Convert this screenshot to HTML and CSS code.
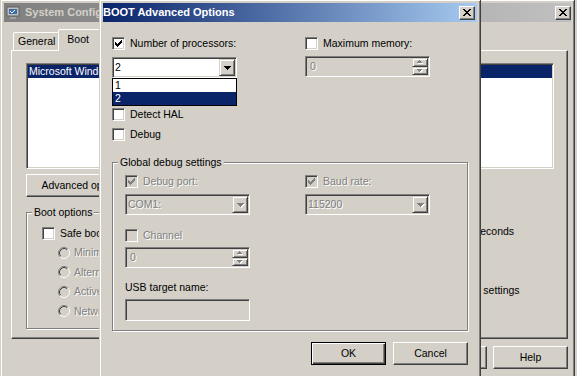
FILE: index.html
```html
<!DOCTYPE html>
<html>
<head>
<meta charset="utf-8">
<title>BOOT Advanced Options</title>
<link rel="stylesheet" href="styles.css">
</head>
<body>

<div class="win sysconf">
  <div class="titlebar inactive">
    <svg class="app-icon" width="16" height="16" viewBox="0 0 16 16">
      <rect x="2" y="2" width="12" height="9" fill="#c0c0c0" stroke="#606060"/>
      <rect x="4" y="4" width="8" height="5" fill="#3a6ea5"/>
      <path d="M5 6l2 2 3-3" stroke="#fff" fill="none"/>
      <rect x="5" y="12" width="6" height="2" fill="#a0a0a0"/>
    </svg>
    <span class="title-text">System Configuration</span>
    <span class="closebtn"><svg width="8" height="7" viewBox="0 0 8 7"><path d="M0 0h2v1H0zM6 0h2v1H6zM1 1h2v1H1zM5 1h2v1H5zM2 2h4v1H2zM3 3h2v1H3zM2 4h4v1H2zM1 5h2v1H1zM5 5h2v1H5zM0 6h2v1H0zM6 6h2v1H6z" fill="#000"/></svg></span>
  </div>
  <div class="client sys-client">
    <div class="tabs">
      <span class="tab">General</span>
      <span class="tab sel">Boot</span>
    </div>
    <div class="panel">
      <div class="listbox field">
        <div class="lb-row sel">Microsoft Windows Server 2008 (C:\Windows) : Current OS; Default OS</div>
      </div>
      <div class="btn-row">
        <button class="btn adv">Advanced options...</button>
      </div>
      <div class="panel-bottom">
        <div class="group boot-group">
          <span class="group-label">Boot options</span>
          <label class="chk"><span class="cb field"></span>Safe boot</label>
          <div class="radios">
            <label class="radio disabled"><svg class="rd" width="12" height="12" viewBox="0 0 12 12"><circle cx="6" cy="6" r="4" fill="#d4d0c8"/><path d="M2.11 9.89A5.5 5.5 0 0 1 9.89 2.11" stroke="#808080" fill="none"/><path d="M9.89 2.11A5.5 5.5 0 0 1 2.11 9.89" stroke="#fff" fill="none"/><path d="M2.82 9.18A4.5 4.5 0 0 1 9.18 2.82" stroke="#404040" fill="none"/><path d="M9.18 2.82A4.5 4.5 0 0 1 2.82 9.18" stroke="#d4d0c8" fill="none"/></svg>Minimal</label>
            <label class="radio disabled"><svg class="rd" width="12" height="12" viewBox="0 0 12 12"><circle cx="6" cy="6" r="4" fill="#d4d0c8"/><path d="M2.11 9.89A5.5 5.5 0 0 1 9.89 2.11" stroke="#808080" fill="none"/><path d="M9.89 2.11A5.5 5.5 0 0 1 2.11 9.89" stroke="#fff" fill="none"/><path d="M2.82 9.18A4.5 4.5 0 0 1 9.18 2.82" stroke="#404040" fill="none"/><path d="M9.18 2.82A4.5 4.5 0 0 1 2.82 9.18" stroke="#d4d0c8" fill="none"/></svg>Alternate shell</label>
            <label class="radio disabled"><svg class="rd" width="12" height="12" viewBox="0 0 12 12"><circle cx="6" cy="6" r="4" fill="#d4d0c8"/><path d="M2.11 9.89A5.5 5.5 0 0 1 9.89 2.11" stroke="#808080" fill="none"/><path d="M9.89 2.11A5.5 5.5 0 0 1 2.11 9.89" stroke="#fff" fill="none"/><path d="M2.82 9.18A4.5 4.5 0 0 1 9.18 2.82" stroke="#404040" fill="none"/><path d="M9.18 2.82A4.5 4.5 0 0 1 2.82 9.18" stroke="#d4d0c8" fill="none"/></svg>Active Directory repair</label>
            <label class="radio disabled"><svg class="rd" width="12" height="12" viewBox="0 0 12 12"><circle cx="6" cy="6" r="4" fill="#d4d0c8"/><path d="M2.11 9.89A5.5 5.5 0 0 1 9.89 2.11" stroke="#808080" fill="none"/><path d="M9.89 2.11A5.5 5.5 0 0 1 2.11 9.89" stroke="#fff" fill="none"/><path d="M2.82 9.18A4.5 4.5 0 0 1 9.18 2.82" stroke="#404040" fill="none"/><path d="M9.18 2.82A4.5 4.5 0 0 1 2.82 9.18" stroke="#d4d0c8" fill="none"/></svg>Network</label>
          </div>
        </div>
        <div class="right-col">
          <div class="timeout-row"><span class="field tb"></span><span>seconds</span></div>
          <label class="chk perm"><span class="cb field"></span><span class="wrap">Make all boot settings</span></label>
        </div>
      </div>
    </div>
    <div class="sys-buttons">
      <button class="btn"></button>
      <button class="btn">Help</button>
    </div>
  </div>
</div>

<div class="win dialog">
  <div class="titlebar active">
    <span class="title-text">BOOT Advanced Options</span>
    <span class="closebtn"><svg width="8" height="7" viewBox="0 0 8 7"><path d="M0 0h2v1H0zM6 0h2v1H6zM1 1h2v1H1zM5 1h2v1H5zM2 2h4v1H2zM3 3h2v1H3zM2 4h4v1H2zM1 5h2v1H1zM5 5h2v1H5zM0 6h2v1H0zM6 6h2v1H6z" fill="#000"/></svg></span>
  </div>
  <div class="client dlg-client">
    <div class="top-grid">
      <div class="col">
        <label class="chk"><span class="cb field"><svg class="ck" width="7" height="7" viewBox="0 0 7 7"><path d="M6 0h1v1H6zM5 1h2v1H5zM0 2h1v1H0zM4 2h3v1H4zM0 3h2v1H0zM3 3h3v1H3zM0 4h5v1H0zM1 5h3v1H1zM2 6h1v1H2z" fill="#000"/></svg></span>Number of processors:</label>
        <div class="combo field procs">
          <span class="combo-value">2</span>
          <span class="drop-btn"><svg width="7" height="4" viewBox="0 0 7 4"><path d="M0 0h7v1H0zM1 1h5v1H1zM2 2h3v1H2zM3 3h1v1H3z" fill="#000"/></svg></span>
          <ul class="droplist">
            <li>1</li>
            <li class="sel">2</li>
          </ul>
        </div>
        <label class="chk hal"><span class="cb field"></span>Detect HAL</label>
        <label class="chk debug"><span class="cb field"></span>Debug</label>
      </div>
      <div class="col">
        <label class="chk"><span class="cb field"></span>Maximum memory:</label>
        <div class="spin field disabled memspin">
          <span class="spin-value">0</span>
          <span class="spin-btns">
            <span class="sb"><svg width="6" height="4" viewBox="0 0 6 4"><path d="M3 1h1v1H3zM2 2h3v1H2zM1 3h5v1H1z" fill="#fff"/><path d="M2 0h1v1H2zM1 1h3v1H1zM0 2h5v1H0z" fill="#808080"/></svg></span>
            <span class="sb"><svg width="6" height="4" viewBox="0 0 6 4"><path d="M1 1h5v1H1zM2 2h3v1H2zM3 3h1v1H3z" fill="#fff"/><path d="M0 0h5v1H0zM1 1h3v1H1zM2 2h1v1H2z" fill="#808080"/></svg></span>
          </span>
        </div>
      </div>
    </div>

    <div class="group debug-group">
      <span class="group-label">Global debug settings</span>
      <div class="group-grid">
        <div class="col">
          <label class="chk disabled"><span class="cb field"><svg class="ck" width="7" height="7" viewBox="0 0 7 7"><path d="M6 0h1v1H6zM5 1h2v1H5zM0 2h1v1H0zM4 2h3v1H4zM0 3h2v1H0zM3 3h3v1H3zM0 4h5v1H0zM1 5h3v1H1zM2 6h1v1H2z" fill="#808080"/></svg></span>Debug port:</label>
          <div class="combo field disabled inner-combo">
            <span class="combo-value">COM1:</span>
            <span class="drop-btn"><svg width="8" height="5" viewBox="0 0 8 5"><path d="M1 1h7v1H1zM2 2h5v1H2zM3 3h3v1H3zM4 4h1v1H4z" fill="#fff"/><path d="M0 0h7v1H0zM1 1h5v1H1zM2 2h3v1H2zM3 3h1v1H3z" fill="#808080"/></svg></span>
          </div>
          <label class="chk disabled channel"><span class="cb field"></span>Channel</label>
          <div class="spin field disabled chanspin">
            <span class="spin-value">0</span>
            <span class="spin-btns">
              <span class="sb"><svg width="6" height="4" viewBox="0 0 6 4"><path d="M3 1h1v1H3zM2 2h3v1H2zM1 3h5v1H1z" fill="#fff"/><path d="M2 0h1v1H2zM1 1h3v1H1zM0 2h5v1H0z" fill="#808080"/></svg></span>
              <span class="sb"><svg width="6" height="4" viewBox="0 0 6 4"><path d="M1 1h5v1H1zM2 2h3v1H2zM3 3h1v1H3z" fill="#fff"/><path d="M0 0h5v1H0zM1 1h3v1H1zM2 2h1v1H2z" fill="#808080"/></svg></span>
            </span>
          </div>
          <span class="usb-label">USB target name:</span>
          <span class="field disabled usb-box"></span>
        </div>
        <div class="col">
          <label class="chk disabled"><span class="cb field"><svg class="ck" width="7" height="7" viewBox="0 0 7 7"><path d="M6 0h1v1H6zM5 1h2v1H5zM0 2h1v1H0zM4 2h3v1H4zM0 3h2v1H0zM3 3h3v1H3zM0 4h5v1H0zM1 5h3v1H1zM2 6h1v1H2z" fill="#808080"/></svg></span>Baud rate:</label>
          <div class="combo field disabled inner-combo">
            <span class="combo-value">115200</span>
            <span class="drop-btn"><svg width="8" height="5" viewBox="0 0 8 5"><path d="M1 1h7v1H1zM2 2h5v1H2zM3 3h3v1H3zM4 4h1v1H4z" fill="#fff"/><path d="M0 0h7v1H0zM1 1h5v1H1zM2 2h3v1H2zM3 3h1v1H3z" fill="#808080"/></svg></span>
          </div>
        </div>
      </div>
    </div>

    <div class="dlg-buttons">
      <button class="btn default">OK</button>
      <button class="btn">Cancel</button>
    </div>
  </div>
</div>

</body>
</html>
```

FILE: styles.css
```css
* { box-sizing: border-box; }
html, body { margin: 0; padding: 0; }
body {
  width: 577px; height: 376px; overflow: hidden; position: relative;
  background: #d4d0c8;
  font: 10.5px/13px "Liberation Sans", Arial, sans-serif;
  color: #000;
}
button { font: inherit; color: inherit; margin: 0; padding: 0; background: #d4d0c8; }
ul { margin: 0; padding: 0; list-style: none; }

/* windows */
.win {
  position: absolute; top: -1px; height: 400px;
  background: #d4d0c8;
  border: 1px solid; border-color: #d4d0c8 #404040 #404040 #d4d0c8;
  box-shadow: inset 1px 1px #fff, inset -1px -1px #808080;
  padding: 3px;
  display: flex; flex-direction: column;
}
.sysconf { left: 0; width: 575px; z-index: 1; }
.dialog { left: 99px; width: 382px; z-index: 2; }

.titlebar {
  flex: none; height: 19px; display: flex; align-items: center;
  font: bold 11px/13px "Liberation Sans", Arial, sans-serif;
  white-space: nowrap; overflow: hidden;
}
.titlebar.active { background: linear-gradient(to right, #0a246a, #a6caf0); color: #fff; padding: 0 2px 0 0; }
.titlebar.inactive { background: linear-gradient(to right, #808080, #c0c0c0); color: #d4d0c8; }
.title-text { flex: 1; overflow: hidden; }
.app-icon { flex: none; margin: 0 4px 0 1px; }
.closebtn {
  flex: none; width: 16px; height: 14px;
  display: flex; align-items: center; justify-content: center;
  background: #d4d0c8;
  border: 1px solid; border-color: #fff #404040 #404040 #fff;
  box-shadow: inset -1px -1px #808080, inset 1px 1px #d4d0c8;
}
.closebtn svg { display: block; }

/* 3D primitives */
.field {
  border: 1px solid; border-color: #808080 #fff #fff #808080;
  box-shadow: inset 1px 1px #404040, inset -1px -1px #d4d0c8;
  background: #fff;
}
.field.disabled { background: #d4d0c8; color: #808080; }
.btn {
  height: 23px; width: 75px;
  border: 1px solid; border-color: #fff #404040 #404040 #fff;
  box-shadow: inset -1px -1px #808080, inset 1px 1px #d4d0c8;
  text-align: center; white-space: nowrap;
}
.btn.default {
  border-color: #000;
  box-shadow: inset 1px 1px #fff, inset -1px -1px #404040, inset -2px -2px #808080;
}
.disabled { color: #808080; }
.chk.disabled, .radio.disabled, .field.disabled .combo-value, .field.disabled .spin-value { text-shadow: 1px 1px #fff; }

/* checkbox */
.chk { display: flex; align-items: center; height: 13px; white-space: nowrap; }
.cb { flex: none; width: 13px; height: 13px; position: relative; margin-right: 5px; }
.chk.disabled .cb { background: #d4d0c8; }
.ck { position: absolute; left: 2px; top: 2px; display: block; }

/* radio */
.radio { display: flex; align-items: center; height: 13px; white-space: nowrap; }
.rd { flex: none; margin-right: 4px; }

/* combo / spin */
.combo, .spin { display: flex; align-items: center; width: 125px; height: 21px; padding: 1px; position: relative; }
.combo-value { flex: 1; padding-left: 1px; }
.drop-btn {
  flex: none; width: 16px; height: 17px;
  display: flex; align-items: center; justify-content: center;
  background: #d4d0c8;
  border: 1px solid; border-color: #d4d0c8 #404040 #404040 #d4d0c8;
  box-shadow: inset 1px 1px #fff, inset -1px -1px #808080;
}
.drop-btn svg { display: block; }
.field.disabled .drop-btn svg { margin: 1px 0 0 1px; }
.spin-value { flex: 1; padding-left: 3px; }
.spin-btns { flex: none; width: 16px; height: 17px; display: flex; flex-direction: column; }
.sb {
  flex: 1; display: flex; align-items: center; justify-content: center;
  background: #d4d0c8;
  border: 1px solid; border-color: #d4d0c8 #404040 #404040 #d4d0c8;
  box-shadow: inset 1px 1px #fff, inset -1px -1px #808080;
}
.sb svg { display: block; }

.droplist {
  position: absolute; left: -1px; top: calc(100% + 1px);
  width: 125px; height: 28px;
  border: 1px solid #000; background: #fff; color: #000;
  z-index: 3;
}
.droplist li { height: 13px; padding-left: 2px; }
.droplist li.sel { background: #0a246a; color: #fff; }

/* group box */
.group {
  position: relative;
  border: 1px solid #808080;
  box-shadow: inset 1px 1px #fff, 1px 1px #fff;
}
.group-label {
  position: absolute; top: -7px; left: 5px;
  padding: 0 2px; background: #d4d0c8; line-height: 13px; white-space: nowrap;
}

/* ---------- System Configuration ---------- */
.sys-client { flex: 1; display: flex; flex-direction: column; }
.tabs { flex: none; display: flex; align-items: flex-end; height: 21px; margin: 7px 0 0 9px; position: relative; z-index: 1; }
.tab {
  height: 18px; padding: 0 4px; white-space: nowrap; line-height: 17px;
  border: 1px solid; border-bottom: 0; border-color: #fff #404040 transparent #fff;
  box-shadow: inset -1px 0 #808080;
  border-radius: 2px 2px 0 0;
  background: #d4d0c8;
}
.tab.sel { height: 22px; width: 60px; margin: 0 -2px -1px; padding: 0 8px; line-height: 19px; position: relative; z-index: 2; }
.panel {
  flex: none; margin-left: 7px; width: 557px; height: 289px;
  border: 1px solid; border-color: #fff #404040 #404040 #fff;
  box-shadow: inset -1px -1px #808080;
  padding: 12px 0 0 14px;
}
.listbox { width: 528px; height: 106px; padding: 1px; overflow: hidden; }
.lb-row { height: 13px; padding-left: 1px; white-space: nowrap; overflow: hidden; }
.lb-row.sel { background: #0a246a; color: #fff; }
.btn-row { display: flex; gap: 6px; margin-top: 5px; }
.btn.adv { width: 123px; }
.panel-bottom { display: flex; }
.boot-group { margin-top: 15px; width: 360px; height: 117px; padding: 14px 0 0 15px; }
.radios { margin: 6px 0 0 16px; display: flex; flex-direction: column; gap: 6.5px; }
.right-col { padding: 24px 0 0 14px; display: flex; flex-direction: column; }
.timeout-row { display: flex; align-items: center; gap: 5px; }
.tb { width: 70px; height: 20px; }
.chk.perm { align-items: flex-start; height: auto; margin-top: 43px; }
.sys-buttons { display: flex; justify-content: flex-end; gap: 6px; margin-top: 7px; padding-right: 3px; }

/* ---------- BOOT Advanced Options ---------- */
.dlg-client { flex: 1; padding: 15px 9px 0 9px; display: flex; flex-direction: column; }
.top-grid { display: grid; grid-template-columns: 193px 1fr; }
.col { display: flex; flex-direction: column; align-items: flex-start; }
.procs { margin-top: 7px; }
.chk.hal { margin-top: 30px; }
.chk.debug { margin-top: 7px; }
.memspin { margin-top: 6px; }

.debug-group { margin-top: 21px; padding: 12px 0 9px 12px; }
.group-grid { display: grid; grid-template-columns: 180px 1fr; }
.inner-combo { margin-top: 6px; }
.chk.channel { margin-top: 14px; }
.chanspin { margin-top: 5px; }
.usb-label { margin-top: 13px; height: 13px; white-space: nowrap; }
.usb-box { margin-top: 5px; width: 125px; height: 22px; display: block; }
.dlg-buttons { display: flex; justify-content: flex-end; gap: 7px; margin-top: 11px; }
```
